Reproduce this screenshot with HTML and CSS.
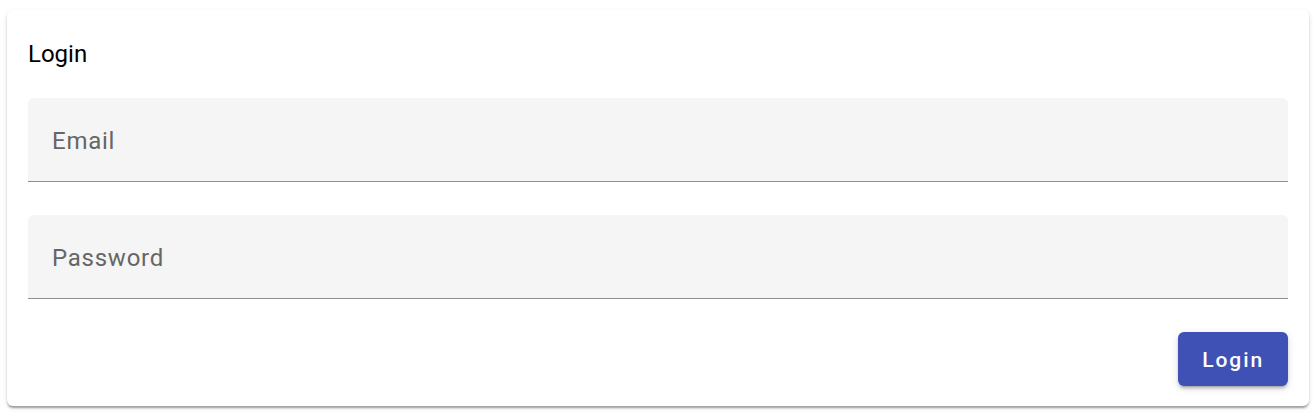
FILE: index.html
```html
<!DOCTYPE html>
<html lang="en">
<head>
    <meta charset="UTF-8">
    <meta name="viewport" content="width=device-width, initial-scale=1.0">
    <title>Login</title>
    <link rel="stylesheet" href="styles.css">
</head>
<body>
    <div class="card">
        <h1 class="card-title">Login</h1>
        <form class="login-form">
            <div class="field">
                <input type="email" class="field-input" placeholder="Email">
            </div>
            <div class="field">
                <input type="password" class="field-input" placeholder="Password">
            </div>
            <div class="actions">
                <button type="button" class="btn">Login</button>
            </div>
        </form>
    </div>
</body>
</html>
```

FILE: styles.css
```css
* {
    margin: 0;
    padding: 0;
    box-sizing: border-box;
    font-family: Roboto, 'Liberation Sans', sans-serif;
}

body {
    background: #fff;
    padding: 10px 7px 7px 7px;
}

.card {
    background: #fff;
    border-radius: 6px;
    padding: 21px 21px 20px;
    box-shadow: 0 3px 2px -1px rgba(0, 0, 0, 0.2),
                0 2px 2px 0 rgba(0, 0, 0, 0.14),
                0 2px 5px 0 rgba(0, 0, 0, 0.12);
}

.card-title {
    font-size: 24px;
    font-weight: 400;
    line-height: 32px;
    color: #000;
    margin: 7px 0 28px;
}

.login-form {
    display: flex;
    flex-direction: column;
    gap: 33px;
}

.field {
    height: 84px;
    background: #f5f5f5;
    border-radius: 6px 6px 0 0;
    border-bottom: 1px solid #8e8e8e;
    display: flex;
    align-items: center;
}

.field-input {
    width: 100%;
    height: 100%;
    border: none;
    outline: none;
    background: transparent;
    padding: 2px 24px 0;
    font-size: 24px;
    letter-spacing: 0.75px;
    color: #222;
}

.field-input::placeholder {
    color: #666;
}

.actions {
    display: flex;
    justify-content: flex-end;
}

.btn {
    height: 54px;
    padding: 1px 24px 0;
    border: none;
    border-radius: 6px;
    background: #3f51b5;
    color: #fff;
    font-size: 21px;
    font-weight: 500;
    letter-spacing: 1.9px;
    cursor: pointer;
    box-shadow: 0 4px 2px -3px rgba(0, 0, 0, 0.2),
                0 3px 3px 0 rgba(0, 0, 0, 0.14),
                0 2px 8px 0 rgba(0, 0, 0, 0.12);
}
```
